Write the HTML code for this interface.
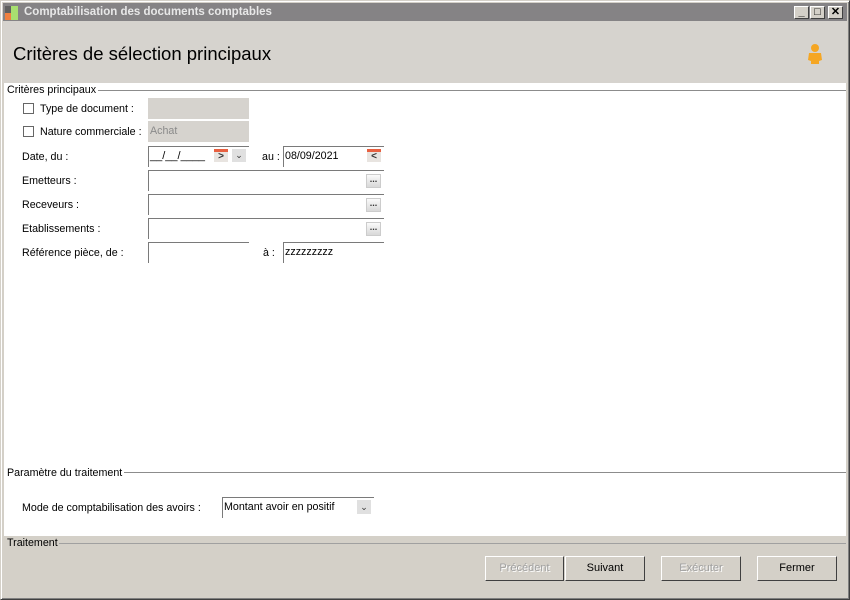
<!DOCTYPE html>
<html><head><meta charset="utf-8"><style>
*{margin:0;padding:0;box-sizing:border-box}
body{width:850px;height:600px;overflow:hidden;background:#d4d0c8;font-family:"Liberation Sans",Tahoma,sans-serif;font-size:11px;color:#000;position:relative}
.a{position:absolute}
.win{left:0;top:0;width:850px;height:600px;border:1px solid;border-color:#d4d0c8 #404040 #404040 #d4d0c8;box-shadow:inset 1px 1px #fff,inset -1px -1px #808080}
.title{left:3px;top:3px;width:844px;height:18px;background:#858385;color:#e8e8e8;font-weight:bold;font-size:11.5px;line-height:18px;padding-left:21px}
.tb{top:6px;width:15px;height:13px;background:#d4d0c8;border:1px solid;border-color:#fff #404040 #404040 #fff;font-size:11px;line-height:11px;text-align:center;font-weight:bold}
.head{left:3px;top:21px;width:844px;height:62px;background:#d6d3ce}
.white{left:4px;top:83px;width:842px;height:453px;background:#fff}
.lbl{font-size:10.7px;white-space:nowrap}
.line{height:1px;background:#8c8c8c}
.inp{height:21px;border-top:1px solid #7a7a7a;border-left:1px solid #7a7a7a;background:#fff;font-size:10.7px;padding:2px 1px;line-height:14px}
.dis{background:#d6d3ce;color:#8a8a8a;border-color:#d6d3ce}
.cb{width:11px;height:11px;border:1px solid #666;background:#fff}
.dots{width:15px;height:14px;background:linear-gradient(#fafafa,#d8d8d8);border:1px solid #ccc;font-size:9px;line-height:8px;text-align:center;font-weight:bold;color:#333}
.btn{top:556px;height:25px;border:1px solid;border-color:#fff #404040 #404040 #fff;background:#d4d0c8;font-size:11px;text-align:center;line-height:22px}
.btn.d{color:#a0a0a0;text-shadow:1px 1px #fff}
</style></head><body>
<div class="a win"></div>
<div class="a title">Comptabilisation des documents comptables</div>
<div class="a" style="left:5px;top:6px;width:6px;height:7px;background:#606060"></div>
<div class="a" style="left:5px;top:13px;width:6px;height:7px;background:#f08040"></div>
<div class="a" style="left:11px;top:6px;width:7px;height:14px;background:#a8e070"></div>
<div class="a tb" style="left:794px">_</div>
<div class="a tb" style="left:810px">□</div>
<div class="a tb" style="left:828px">✕</div>
<div class="a head"></div>
<div class="a" style="left:13px;top:43px;font-size:18.5px">Critères de sélection principaux</div>
<svg class="a" style="left:806px;top:43px" width="18" height="22"><circle cx="9" cy="5" r="4" fill="#f5a623"/><path d="M3 10h12l1 7-3 1v3H5v-3l-3-1z" fill="#f5a623"/></svg>
<div class="a white"></div>
<div class="a lbl" style="left:7px;top:84px">Critères principaux</div>
<div class="a line" style="left:98px;top:90px;width:748px"></div>
<div class="a cb" style="left:23px;top:103px"></div><div class="a lbl" style="left:40px;top:103px">Type de document :</div>
<div class="a inp dis" style="left:148px;top:98px;width:101px"></div>
<div class="a cb" style="left:23px;top:126px"></div><div class="a lbl" style="left:40px;top:126px">Nature commerciale :</div>
<div class="a inp dis" style="left:148px;top:121px;width:101px">Achat</div>
<div class="a lbl" style="left:22px;top:151px">Date, du :</div>
<div class="a inp" style="left:148px;top:146px;width:101px;font-size:11px">__/__/____</div>
<div class="a" style="left:214px;top:149px;width:14px;height:13px;background:#e8e4e0;border-top:3px solid #e86040;font-size:10px;line-height:9px;text-align:center;font-weight:bold;color:#333">&gt;</div>
<div class="a" style="left:232px;top:149px;width:14px;height:13px;background:#e0e0e0;font-size:9px;line-height:13px;text-align:center;color:#333">⌄</div>
<div class="a lbl" style="left:262px;top:151px">au :</div>
<div class="a inp" style="left:283px;top:146px;width:101px">08/09/2021</div>
<div class="a" style="left:367px;top:149px;width:14px;height:13px;background:#e8e4e0;border-top:3px solid #e86040;font-size:10px;line-height:9px;text-align:center;font-weight:bold;color:#333">&lt;</div>
<div class="a lbl" style="left:22px;top:175px">Emetteurs :</div>
<div class="a inp" style="left:148px;top:170px;width:236px"></div><div class="a dots" style="left:366px;top:174px">...</div>
<div class="a lbl" style="left:22px;top:199px">Receveurs :</div>
<div class="a inp" style="left:148px;top:194px;width:236px"></div><div class="a dots" style="left:366px;top:198px">...</div>
<div class="a lbl" style="left:22px;top:223px">Etablissements :</div>
<div class="a inp" style="left:148px;top:218px;width:236px"></div><div class="a dots" style="left:366px;top:222px">...</div>
<div class="a lbl" style="left:22px;top:247px">Référence pièce, de :</div>
<div class="a inp" style="left:148px;top:242px;width:101px"></div>
<div class="a lbl" style="left:263px;top:247px">à :</div>
<div class="a inp" style="left:283px;top:242px;width:101px">zzzzzzzzz</div>
<div class="a lbl" style="left:7px;top:467px">Paramètre du traitement</div>
<div class="a line" style="left:124px;top:472px;width:722px"></div>
<div class="a lbl" style="left:22px;top:502px">Mode de comptabilisation des avoirs :</div>
<div class="a inp" style="left:222px;top:497px;width:152px">Montant avoir en positif</div>
<div class="a" style="left:357px;top:500px;width:14px;height:14px;background:#e0e0e0;font-size:9px;line-height:14px;text-align:center;color:#333">⌄</div>
<div class="a lbl" style="left:7px;top:537px">Traitement</div>
<div class="a line" style="left:59px;top:543px;width:787px;background:#a0a0a0"></div>
<div class="a btn d" style="left:485px;width:79px">Précédent</div>
<div class="a btn" style="left:565px;width:80px">Suivant</div>
<div class="a btn d" style="left:661px;width:80px">Exécuter</div>
<div class="a btn" style="left:757px;width:80px">Fermer</div>
</body></html>
